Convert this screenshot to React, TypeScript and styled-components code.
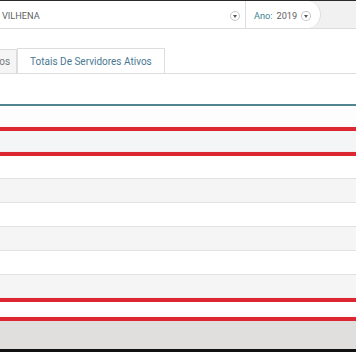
import React from "react";
import styled, { createGlobalStyle } from "styled-components";

const Global = createGlobalStyle`
  html, body { margin: 0; padding: 0; background: #fff; }
  body { font-family: Roboto, "Liberation Sans", sans-serif; overflow: hidden; }
`;

const Page = styled.div`
  width: 356px;
  height: 352px;
  display: flex;
  flex-direction: column;
  overflow: hidden;
  border-top: 1px solid #2a2a2a;
  box-sizing: border-box;
`;

const FilterBar = styled.div`
  height: 27px;
  display: flex;
  background: #f1f1f1;
  border-bottom: 1px solid #dcdcdc;
  flex-shrink: 0;
`;

const FilterBox = styled.div`
  width: 321px;
  display: flex;
  background: #fff;
  border-right: 1px solid #dedede;
  border-radius: 0 14px 14px 0;
  box-sizing: border-box;
`;

const Select = styled.div<{ $w: number; $divider?: boolean; $pr: number }>`
  width: ${(p) => p.$w}px;
  display: flex;
  align-items: center;
  box-sizing: border-box;
  padding: 2px ${(p) => p.$pr}px 0 ${(p) => (p.$divider ? 8 : 2)}px;
  border-left: ${(p) => (p.$divider ? "1px solid #dedede" : "none")};
  font-size: 9.2px;
  color: #5f5f5f;
`;

const Label = styled.span`
  color: #3d7f92;
  margin-right: 4px;
`;

const Value = styled.span`
  flex: 1;
`;

const Caret = styled.span`
  width: 10px;
  height: 10px;
  box-sizing: border-box;
  border-radius: 50%;
  border: 1px solid #c6c6c6;
  display: inline-flex;
  align-items: center;
  justify-content: center;
  margin-left: 4px;
  &::after {
    content: "";
    border-left: 2.5px solid transparent;
    border-right: 2.5px solid transparent;
    border-top: 3px solid #555;
    margin-top: 1px;
  }
`;

const TabsRow = styled.div`
  display: flex;
  align-items: flex-end;
  height: 44px;
  border-bottom: 1px solid #dddddd;
  flex-shrink: 0;
  overflow: hidden;
`;

const Tab = styled.div<{ $active?: boolean; $offset?: number; $pr?: number }>`
  display: flex;
  align-items: center;
  box-sizing: border-box;
  padding: 0 ${(p) => p.$pr ?? 12}px 0 12px;
  margin-left: ${(p) => p.$offset ?? 0}px;
  margin-bottom: -1px;
  font-size: 10px;
  white-space: nowrap;
  border: 1px solid #dddddd;
  border-bottom: ${(p) => (p.$active ? "1px solid #fff" : "1px solid #dddddd")};
  background: ${(p) => (p.$active ? "#fff" : "#f5f5f5")};
  color: ${(p) => (p.$active ? "#4a7893" : "#777")};
  height: ${(p) => (p.$active ? 26 : 25)}px;
`;

const Spacer = styled.div`
  height: 30px;
  flex-shrink: 0;
`;

const HeadLine = styled.div`
  height: 2px;
  background: #4f868f;
  box-shadow: 0 1px 0 #bcd6d8;
  flex-shrink: 0;
`;

const Row = styled.div<{ $h: number; $bg: string; $line?: boolean }>`
  height: ${(p) => p.$h}px;
  background: ${(p) => p.$bg};
  border-bottom: ${(p) => (p.$line ? "1px solid #e2e2e2" : "none")};
  flex-shrink: 0;
`;

const RedBar = styled.div`
  height: 4px;
  background: #dc2631;
  box-shadow: 0 0 1px rgba(220, 38, 49, 0.35);
  flex-shrink: 0;
`;

const Footer = styled.div`
  flex: 1;
  background: #e1dfde;
  border-bottom: 3px solid #111;
`;

export default function App() {
  return (
    <>
      <Global />
      <Page>
        <FilterBar>
          <FilterBox>
            <Select $w={245} $pr={5}>
              <Value>VILHENA</Value>
              <Caret />
            </Select>
            <Select $w={75} $pr={9} $divider>
              <Label>Ano:</Label>
              <Value>2019</Value>
              <Caret />
            </Select>
          </FilterBox>
        </FilterBar>
        <TabsRow>
          <Tab $offset={-40} $pr={6}>Gráficos</Tab>
          <Tab $active>Totais De Servidores Ativos</Tab>
        </TabsRow>
        <Spacer />
        <HeadLine />
        <Row $h={21} $bg="#fdfdfd" />
        <RedBar />
        <Row $h={21} $bg="#f4f5f6" />
        <RedBar />
        <Row $h={22} $bg="#ffffff" $line />
        <Row $h={23} $bg="#f5f5f5" $line />
        <Row $h={23} $bg="#ffffff" $line />
        <Row $h={23} $bg="#f5f5f5" $line />
        <Row $h={23} $bg="#ffffff" $line />
        <Row $h={23} $bg="#f5f5f5" />
        <RedBar />
        <Row $h={15} $bg="#ffffff" />
        <RedBar />
        <Footer />
      </Page>
    </>
  );
}
